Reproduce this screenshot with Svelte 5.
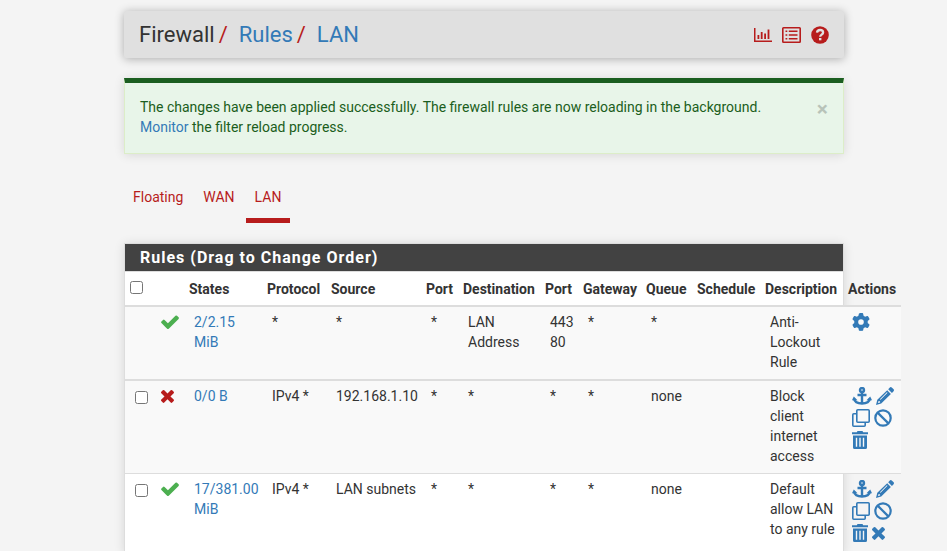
<script>
  const tabs = ['Floating', 'WAN', 'LAN'];
  let active = $state('LAN');
  let showAlert = $state(true);

  const columns = [
    ['States', 78], ['Protocol', 64], ['Source', 95], ['Port', 37], ['Destination', 82], ['Port', 38],
    ['Gateway', 63], ['Queue', 51], ['Schedule', 68], ['Description', 83], ['Actions', 58]
  ];

  const rules = [
    { locked: true, pass: true, states: '2/2.15 MiB', cells: ['*', '*', '*', 'LAN Address', '443 80', '*', '*', '', 'Anti-Lockout Rule'], actions: ['gear'] },
    { pass: false, states: '0/0 B', cells: ['IPv4 *', '192.168.1.10', '*', '*', '*', '*', 'none', '', 'Block client internet access'], actions: ['anchor', 'pencil', 'clone', 'ban', 'trash'] },
    { pass: true, states: '17/381.00 MiB', cells: ['IPv4 *', 'LAN subnets', '*', '*', '*', '*', 'none', '', 'Default allow LAN to any rule'], actions: ['anchor', 'pencil', 'clone', 'ban', 'trash', 'times'] }
  ];

  const labels = { gear: 'Settings', anchor: 'Move rule', pencil: 'Edit', clone: 'Copy', ban: 'Disable', trash: 'Delete', times: 'Kill states' };
</script>

{#snippet icon(name)}
  {#if name === 'gear'}
    <svg width="18" height="18" viewBox="0 0 512 512"><path d="M495.9 166.6c3.2 8.7 .5 18.4-6.4 24.6l-43.3 39.4c1.1 8.3 1.7 16.8 1.7 25.4s-.6 17.1-1.7 25.4l43.3 39.4c6.9 6.2 9.6 15.9 6.4 24.6c-4.4 11.9-9.7 23.3-15.8 34.3l-4.7 8.1c-6.6 11-14 21.4-22.1 31.2c-5.9 7.2-15.7 9.6-24.5 6.8l-55.7-17.7c-13.4 10.3-28.2 18.9-44 25.4l-12.5 57.1c-2 9.1-9 16.3-18.2 17.8c-13.8 2.3-28 3.5-42.5 3.5s-28.7-1.2-42.5-3.5c-9.2-1.5-16.2-8.7-18.2-17.8l-12.5-57.1c-15.8-6.5-30.6-15.1-44-25.4L83.1 425.9c-8.8 2.8-18.6 .3-24.5-6.8c-8.1-9.8-15.5-20.2-22.1-31.2l-4.7-8.1c-6.1-11-11.4-22.4-15.8-34.3c-3.2-8.7-.5-18.4 6.4-24.6l43.3-39.4C64.6 273.1 64 264.6 64 256s.6-17.1 1.7-25.4L22.4 191.2c-6.9-6.2-9.6-15.9-6.4-24.6c4.4-11.9 9.7-23.3 15.8-34.3l4.7-8.1c6.6-11 14-21.4 22.1-31.2c5.9-7.2 15.7-9.6 24.5-6.8l55.7 17.7c13.4-10.3 28.2-18.9 44-25.4l12.5-57.1c2-9.1 9-16.3 18.2-17.8C227.3 1.2 241.5 0 256 0s28.7 1.2 42.5 3.5c9.2 1.5 16.2 8.7 18.2 17.8l12.5 57.1c15.8 6.5 30.6 15.1 44 25.4l55.7-17.7c8.8-2.8 18.6-.3 24.5 6.8c8.1 9.8 15.5 20.2 22.1 31.2l4.7 8.1c6.1 11 11.4 22.4 15.8 34.3zM256 336a80 80 0 1 0 0-160 80 80 0 1 0 0 160z" /></svg>
  {:else if name === 'anchor'}
    <svg width="20" height="18" viewBox="0 0 20 18"><g fill="none" stroke="currentColor" stroke-width="2.4"><circle cx="10" cy="3" r="2" /><path d="M10 5v11.5M5.5 8h9M1.900 11.500c.6 3 3.700 5 8.100 5s7.500-2 8.100-5" /></g><path d="M0 13.200 1.800 9.600 5.500 13.200zM20 13.200 18.200 9.600 14.500 13.200z" /></svg>
  {:else if name === 'pencil'}
    <svg width="18" height="18" viewBox="0 0 18 18"><path fill-rule="evenodd" d="M12.200 2.200 13.600.7q1.200-1.200 2.400 0L17.400 2.100q1.200 1.200 0 2.400L15.900 5.900zM11.200 3.200 14.900 6.900 5.200 16.600 0 18 1.300 12.800zM2.500 13.900 1.900 16.100 4.100 15.500 4 14.300 2.600 14.200zM10.900 5.200 3.900 12.200l.6.6L11.500 5.800z" /></svg>
  {:else if name === 'clone'}
    <svg width="18" height="18" viewBox="0 0 18 18"><g fill="none" stroke="currentColor" stroke-width="1.600"><rect x="4.800" y=".8" width="12.400" height="12.400" rx="1" /><path d="M4 4.800H1.800q-1 0-1 1v10.400q0 1 1 1h10.400q1 0 1-1V14" /></g></svg>
  {:else if name === 'ban'}
    <svg width="18" height="18" viewBox="0 0 18 18"><g fill="none" stroke="currentColor" stroke-width="2.200"><circle cx="9" cy="9" r="7.700" /><path d="M3.600 3.600 14.400 14.400" /></g></svg>
  {:else if name === 'trash'}
    <svg width="16" height="18" viewBox="0 0 16 18"><path fill-rule="evenodd" d="M0 1.200h4.800L5.500 0h5l.7 1.200H16v2H0zM1 4.500h14v12q0 1.500-1.500 1.500h-11Q1 18 1 16.500zM3.800 6.700v9h1.400v-9zM7.300 6.700v9h1.400v-9zM10.800 6.700v9h1.400v-9z" /></svg>
  {:else if name === 'times'}
    <svg width="13" height="18" viewBox="302 100 1190 1648"><path d="M1490 1322q0 40-28 68l-136 136q-28 28-68 28t-68-28l-294-294-294 294q-28 28-68 28t-68-28l-136-136q-28-28-28-68t28-68l294-294-294-294q-28-28-28-68t28-68l136-136q28-28 68-28t68 28l294 294 294-294q28-28 68-28t68 28l136 136q28 28 28 68t-28 68l-294 294 294 294q28 28 28 68z" /></svg>
  {:else if name === 'check'}
    <svg width="18" height="18" viewBox="110 120 1570 1570"><path d="M1671 566q0 40-28 68l-724 724-136 136q-28 28-68 28t-68-28l-136-136-362-362q-28-28-28-68t28-68l136-136q28-28 68-28t68 28l294 295 656-657q28-28 68-28t68 28l136 136q28 28 28 68z" /></svg>
  {:else if name === 'chart'}
    <svg width="18" height="18" viewBox="0 0 18 18"><path d="M0 2h1.500v12.500H18V16H0zM3.500 9h1.800v4H3.500zM6.800 6h1.800v7H6.800zM10.200 7.500h1.800V13h-1.800zM13.600 3.500h1.800V13h-1.800z" /></svg>
  {:else if name === 'list'}
    <svg width="19" height="18" viewBox="0 0 19 18"><path fill-rule="evenodd" d="M1.500 1h16Q19 1 19 2.500v13q0 1.500-1.500 1.500h-16Q0 17 0 15.500v-13Q0 1 1.500 1zM1.600 2.600v12.800h15.800V2.600zM3.500 4.500h1.800v1.600H3.500zM6.800 4.500h8.700v1.600H6.800zM3.500 8.200h1.800v1.600H3.500zM6.800 8.200h8.700v1.600H6.800zM3.500 11.900h1.800v1.600H3.500zM6.800 11.900h8.700v1.600H6.800z" /></svg>
  {:else if name === 'help'}
    <svg width="18" height="18" viewBox="0 0 18 18"><circle cx="9" cy="9" r="8.800" /><path d="M6 6.700C6.200 4.900 7.500 4 9.100 4c1.800 0 3 1.100 3 2.500 0 2.200-2.900 2.100-2.900 4.200" fill="none" stroke="#e0e0e0" stroke-width="2.300" /><rect x="8" y="12" width="2.400" height="2.300" fill="#e0e0e0" /></svg>
  {/if}
{/snippet}

<main>
  <header>
    <nav aria-label="Breadcrumb">
      <ol>
        <li>Firewall</li>
        <li><a href="#rules">Rules</a></li>
        <li><a href="#lan">LAN</a></li>
      </ol>
    </nav>
    <div class="tools">
      <a href="#status" aria-label="Status">{@render icon('chart')}</a>
      <a href="#log" aria-label="Log">{@render icon('list')}</a>
      <a href="#help" aria-label="Help">{@render icon('help')}</a>
    </div>
  </header>

  {#if showAlert}
    <div class="alert" role="status">
      <p>The changes have been applied successfully. The firewall rules are now reloading in the background.<br /><a href="#monitor">Monitor</a> the filter reload progress.</p>
      <button type="button" class="close" aria-label="Close" onclick={() => (showAlert = false)}>×</button>
    </div>
  {/if}

  <nav class="tabs" aria-label="Interfaces">
    {#each tabs as tab}
      <a href="#{tab}" class:active={tab === active} onclick={() => (active = tab)}>{tab}</a>
    {/each}
  </nav>

  <section class="panel">
    <h2>Rules (Drag to Change Order)</h2>
    <table>
      <colgroup>
        <col style:width="27px" />
        <col style:width="32px" />
        {#each columns as [, width]}<col style:width="{width}px" />{/each}
      </colgroup>
      <thead>
        <tr>
          <th><input type="checkbox" aria-label="Select all rules" /></th>
          <th></th>
          {#each columns as [name]}<th scope="col">{name}</th>{/each}
        </tr>
      </thead>
      <tbody>
        {#each rules as rule}
          <tr class:shaded={rule.locked || !rule.pass} class:first={!rule.locked && !rule.pass}>
            <td>{#if !rule.locked}<input type="checkbox" aria-label="Select rule {rule.cells[8]}" />{/if}</td>
            <td class="status" class:pass={rule.pass}>{@render icon(rule.pass ? 'check' : 'times')}</td>
            <td><a href="#states">{rule.states}</a></td>
            {#each rule.cells as cell}<td>{cell}</td>{/each}
            <td class="actions">
              <div>
                {#each rule.actions as action}<a href="#{action}" aria-label={labels[action]}>{@render icon(action)}</a>{/each}
              </div>
            </td>
          </tr>
        {/each}
      </tbody>
    </table>
  </section>
</main>

<style>
  :global(html) { scrollbar-width: none; }
  :global(body) {
    background: #f4f4f4;
    color: #333;
    font: 14px/20px Roboto, sans-serif;
    padding-left: 21px;
  }
  main { max-width: 720px; margin: 0 auto; padding-top: 11px; }
  a { color: #337ab7; text-decoration: none; }
  svg { display: block; fill: currentColor; }

  header {
    display: flex;
    align-items: center;
    justify-content: space-between;
    padding: 9px 15px;
    background: #e0e0e0;
    border-radius: 2px;
    box-shadow: 0 1px 10px rgba(0, 0, 0, 0.3);
  }
  ol { display: flex; margin: 0; padding: 0; list-style: none; font-size: 22px; line-height: 29px; }
  li + li::before { content: '/'; color: #b71c1c; padding: 0 11px 0 4px; }
  .tools { display: flex; gap: 10px; }
  .tools a { color: #b71c1c; }

  .alert {
    display: flex;
    justify-content: space-between;
    margin-top: 20px;
    padding: 14px 15px 16px;
    background: #e8f5e9;
    border: 1px solid #dcedc8;
    border-top: 5px solid #1b5e20;
    color: #1b5e20;
    box-shadow: 0 1px 10px rgba(0, 0, 0, 0.12);
  }
  .alert p { margin: 0; }
  .close {
    align-self: flex-start;
    padding: 0;
    border: 0;
    background: none;
    color: #000;
    opacity: 0.2;
    font: bold 21px/24px Roboto, sans-serif;
  }

  .tabs { display: flex; gap: 2px; margin-top: 24px; }
  .tabs a { padding: 9px 9px 11px; border-bottom: 5px solid transparent; color: #b71c1c; }
  .tabs a.active { border-color: #b71c1c; }

  .panel {
    margin-top: 20px;
    background: #fff;
    border: 1px solid #ddd;
    box-shadow: 0 1px 10px rgba(0, 0, 0, 0.12);
  }
  h2 {
    margin: 0;
    padding: 4px 15px 3px;
    background: #424242;
    border-bottom: 1px solid #ddd;
    color: #fff;
    font-size: 16px;
    line-height: 20px;
    letter-spacing: 1px;
  }
  table { width: 100%; min-width: 776px; table-layout: fixed; border-spacing: 0; }
  th { padding: 7px 0 6px 5px; border-bottom: 2px solid #ddd; text-align: left; white-space: nowrap; }
  th:first-child { vertical-align: top; }
  td { padding: 5px 3px 7px 10px; vertical-align: top; border-top: 1px solid #ddd; }
  tbody tr:first-child td { border-top: 0; }
  tr.first td { border-top-width: 2px; }
  .shaded { background: #f9f9f9; }
  input { display: block; margin: 5px 0 0; width: 13px; height: 13px; }
  th input { margin-top: 2px; }
  td:first-child, .status { padding-right: 0; }
  .status { padding-left: 9px; color: #b71c1c; }
  .status svg { margin-top: 1px; }
  .pass { color: #4caf50; }
  .actions { padding-left: 9px; }
  .actions div { display: flex; flex-wrap: wrap; gap: 2px 4px; padding-bottom: 2px; }
  .actions a { display: flex; align-items: center; height: 20px; }
</style>
